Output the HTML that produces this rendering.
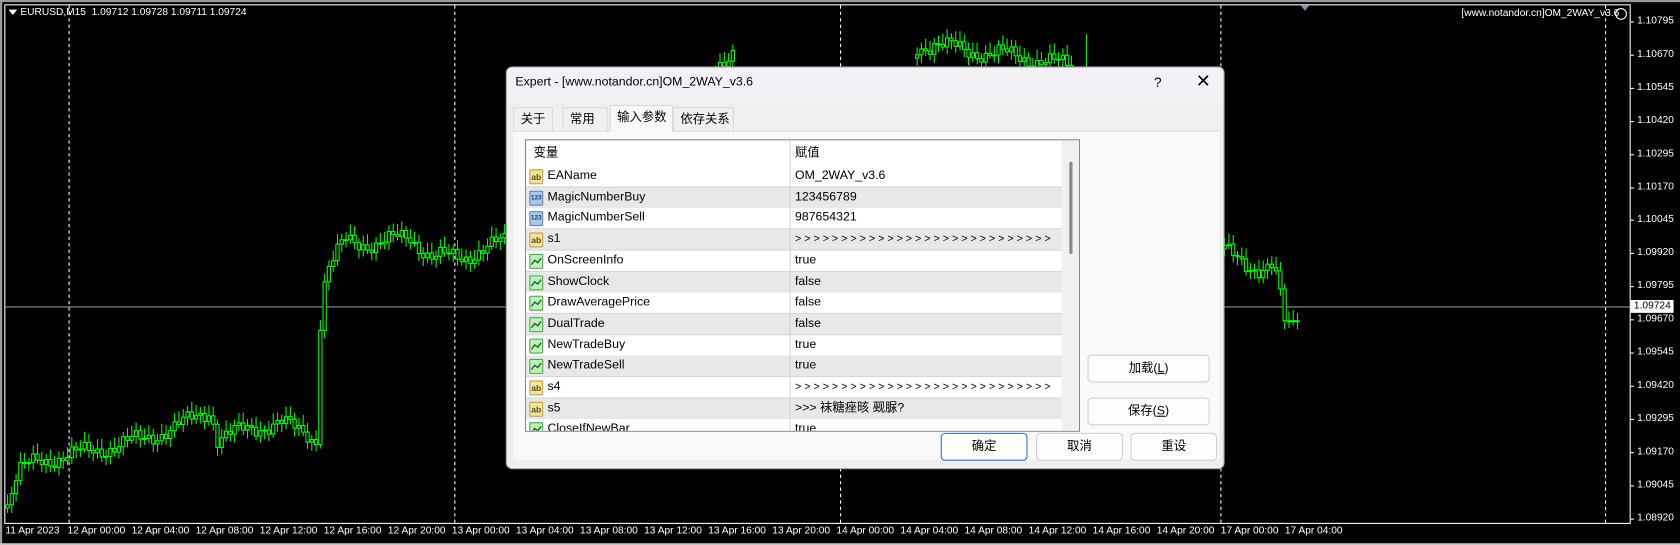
<!DOCTYPE html>
<html><head><meta charset="utf-8">
<style>
*{margin:0;padding:0;box-sizing:border-box}
html,body{width:1680px;height:545px;background:#000;overflow:hidden}
#root{position:absolute;left:0;top:0;width:1568px;height:509px;transform:scale(1.07143);transform-origin:0 0;font-family:"Liberation Sans","Noto Sans CJK SC",sans-serif}
.ax{position:absolute;color:#fff;font-size:9.5px;white-space:nowrap}
#dlg{position:absolute;left:472px;top:62px;width:671px;height:376px;background:#efefef;border:1px solid #9a9a9a;border-radius:6px;overflow:hidden}
#tb{position:absolute;left:0;top:0;width:100%;height:34px;background:#f3f1f5;font-size:11.5px;color:#000}
.tab{position:absolute;top:37px;height:23px;font-size:11.5px;line-height:22px;padding-left:6px;border:1px solid #d9d9d9;border-bottom:none;background:#f0f0f0}
#panel{position:absolute;left:6px;top:59px;width:659px;height:307px;background:#f9f9f9;border-top:1px solid #dcdcdc}
#list{position:absolute;left:17px;top:67px;width:518px;height:273px;border:1px solid #828790;background:#fff;overflow:hidden}
.row{position:absolute;left:0;width:500px;height:20px;font-size:11.5px;line-height:19px;border-bottom:1px solid #d4d4d4}
.row .n{position:absolute;left:20px}
.row .v{position:absolute;left:251px}
.row .sep{position:absolute;left:246px;top:0;width:1px;height:20px;background:#d4d4d4}
.ic{position:absolute;left:3px;top:3px;width:13px;height:14px;border-radius:1px;font-size:8px;line-height:13px;text-align:center;font-weight:bold;overflow:hidden}
.ab{background:#f4e39a;border:1px solid #b9a24a;color:#5a4a10}
.nm{background:#a9c8ea;border:1px solid #5b86b8;color:#1c3c6c;font-size:6px}
.gr{background:#bfeebf;border:1px solid #4aa84a}
.btn{position:absolute;height:26px;background:#fdfdfd;border:1px solid #cfcfcf;border-radius:4px;font-size:11.5px;text-align:center;line-height:24px}
</style></head><body>
<div id="root">
<div style="position:absolute;left:0;top:0;width:1568px;height:2px;background:#9a9a9a"></div>
<div style="position:absolute;left:0;top:0;width:2px;height:509px;background:#9a9a9a"></div>
<div style="position:absolute;left:0;top:507px;width:1568px;height:2px;background:#c8c8c8"></div>
<svg id="ch" width="1568" height="509" style="position:absolute;left:0;top:0">
<rect x="4.5" y="4.5" width="1517" height="484" fill="none" stroke="#fff" stroke-width="1"/>
<g stroke="#fff" stroke-dasharray="3,3" stroke-width="1">
<line x1="64.5" y1="5" x2="64.5" y2="488"/><line x1="424.5" y1="5" x2="424.5" y2="488"/>
<line x1="784.5" y1="5" x2="784.5" y2="488"/><line x1="1139.5" y1="5" x2="1139.5" y2="488"/>
<line x1="1498.5" y1="5" x2="1498.5" y2="488"/></g>
<line x1="5" y1="286.5" x2="1521" y2="286.5" stroke="#8a8f98"/>
<polygon points="1214,5 1222,5 1218,10" fill="#8090a8"/>
<polygon points="8,9 16,9 12,14" fill="#fff"/>
<g id="cd" fill="#000" stroke="#00ff00" stroke-width="1"></g>
<rect x="1522" y="280" width="40" height="12" fill="#fff"/>
<circle cx="1513" cy="13" r="5" fill="none" stroke="#fff"/>
</svg>
<div class="ax" style="left:19px;top:6px">EURUSD,M15&nbsp; 1.09712 1.09728 1.09711 1.09724</div>
<div class="ax" style="left:1364px;top:7px">[www.notandor.cn]OM_2WAY_v3.6</div>
<div id="pr"></div><div id="tm"></div>

<div id="dlg">
 <div id="tb"><span style="position:absolute;left:8px;top:8px">Expert - [www.notandor.cn]OM_2WAY_v3.6</span>
  <span style="position:absolute;left:604px;top:6px;font-size:13px">?</span>
  <span style="position:absolute;left:643px;top:3px;font-size:17px">✕</span></div>
 <div class="tab" style="left:6px;width:37px">关于</div>
 <div class="tab" style="left:52px;width:42px">常用</div>
 <div class="tab" style="left:96px;width:59px;top:35px;height:25px;background:#f9f9f9;z-index:2">输入参数</div>
 <div class="tab" style="left:155px;width:57px">依存关系</div>
 <div id="panel"></div>
 <div id="list">
  <div class="row" style="top:0;height:24px;line-height:24px;border-bottom:none"><span style="position:absolute;left:7px">变量</span><span class="v">赋值</span><div class="sep" style="height:24px"></div></div>
  <div id="rows"></div>
  <div style="position:absolute;left:500px;top:0;width:17px;height:273px;background:#f0f0f0"></div>
  <div style="position:absolute;left:507px;top:20px;width:3px;height:86px;background:#8a8a8a;border-radius:2px"></div>
 </div>
 <div class="btn" style="left:542px;top:268px;width:114px">加载(<u>L</u>)</div>
 <div class="btn" style="left:542px;top:308px;width:114px">保存(<u>S</u>)</div>
 <div class="btn" style="left:405px;top:341px;width:81px;border:1px solid #2a6fc9">确定</div>
 <div class="btn" style="left:494px;top:341px;width:81px">取消</div>
 <div class="btn" style="left:582px;top:341px;width:81px">重设</div>
</div>
</div>
<script>
var rows=[["ab","EAName","OM_2WAY_v3.6"],["nm","MagicNumberBuy","123456789"],["nm","MagicNumberSell","987654321"],["ab","s1",">>>>>>>>>>>>>>>>>>>>>>>>>>>>"],["gr","OnScreenInfo","true"],["gr","ShowClock","false"],["gr","DrawAveragePrice","false"],["gr","DualTrade","false"],["gr","NewTradeBuy","true"],["gr","NewTradeSell","true"],["ab","s4",">>>>>>>>>>>>>>>>>>>>>>>>>>>>"],["ab","s5",">>> 袜糖痤晐 觋脲?"],["gr","CloseIfNewBar","true"]];
var h="";rows.forEach(function(r,i){var t=24+i*19.7;var bg=i%2?"#e8e8e8":"#fff";
var tx=r[0]=="ab"?"ab":r[0]=="nm"?"123":'<svg width="11" height="12"><polyline points="1,9 4,5 7,7 10,3" fill="none" stroke="#1a6a1a" stroke-width="1.3"/></svg>';
var v=r[2];if(v[0]==">"&&v.length>20)v=v.split("").join(" ");
h+='<div class="row" style="top:'+t+'px;background:'+bg+'"><div class="ic '+r[0]+'">'+tx+'</div><span class="n">'+r[1]+'</span><div class="sep"></div><span class="v" style="'+(r[2][0]==">"&&r[2].length>20?"font-size:10px":"")+'">'+v+'</span></div>';});
document.getElementById("rows").innerHTML=h;
var p="",prices=["1.10795","1.10670","1.10545","1.10420","1.10295","1.10170","1.10045","1.09920","1.09795","1.09670","1.09545","1.09420","1.09295","1.09170","1.09045","1.08920"];
prices.forEach(function(s,i){var y=20+i*30.9;p+='<div class="ax" style="left:1528px;top:'+(y-6)+'px">'+s+'</div><div style="position:absolute;left:1522px;top:'+y+'px;width:3px;height:1px;background:#fff"></div>';});
p+='<div class="ax" style="left:1525px;top:280px;color:#000">1.09724</div>';
document.getElementById("pr").innerHTML=p;
var t=["11 Apr 2023","12 Apr 00:00","12 Apr 04:00","12 Apr 08:00","12 Apr 12:00","12 Apr 16:00","12 Apr 20:00","13 Apr 00:00","13 Apr 04:00","13 Apr 08:00","13 Apr 12:00","13 Apr 16:00","13 Apr 20:00","14 Apr 00:00","14 Apr 04:00","14 Apr 08:00","14 Apr 12:00","14 Apr 16:00","14 Apr 20:00","17 Apr 00:00","17 Apr 04:00"];
var q="";t.forEach(function(s,i){var x=i==0?5:63+(i-1)*59.8;q+='<div class="ax" style="left:'+x+'px;top:490px">'+s+'</div>';});
document.getElementById("tm").innerHTML=q;
var kf=[[5,470],[15,440],[30,432],[60,425],[90,420],[130,410],[160,400],[195,382],[200,410],[230,400],[260,395],[285,405],[293,410],[297,300],[302,255],[320,225],[350,228],[380,220],[400,240],[430,240],[470,225],[480,225]];
var kf2=[[666,58],[682,52]];
var kf3=[[854,45],[870,40],[900,48],[930,50],[960,55],[1000,62]];
var kf4=[[1141,235],[1160,245],[1175,252],[1185,250],[1190,262],[1197,300],[1203,305],[1210,290]];
var s="";function seg(k,step){var prev=null;for(var x=k[0][0];x<=k[k.length-1][0];x+=step){var j=0;while(j<k.length-2&&x>k[j+1][0])j++;var a=k[j],b=k[j+1];var y=a[1]+(b[1]-a[1])*(x-a[0])/(b[0]-a[0])+Math.sin(x*1.7)*6+Math.cos(x*0.53)*4;
var o=prev==null?y+3:prev;var c=y;var top=Math.min(o,c),bot=Math.max(o,c);var hh=Math.max(bot-top,1);
s+='<line x1="'+(x+2)+'" y1="'+(top-4-Math.abs(Math.sin(x))*6)+'" x2="'+(x+2)+'" y2="'+(bot+3+Math.abs(Math.cos(x))*5)+'"/><rect x="'+(x+0.5)+'" y="'+top+'" width="3" height="'+hh+'"/>';prev=c;}}
seg(kf,4);seg(kf2,4);seg(kf3,4);seg(kf4,4);
s+='<line x1="1014" y1="32" x2="1014" y2="62"/>';
document.getElementById("cd").innerHTML=s;
</script>
</body></html>
